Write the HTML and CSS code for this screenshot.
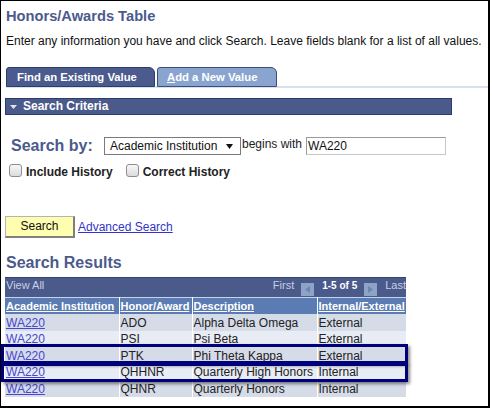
FILE: index.html
```html
<!DOCTYPE html>
<html>
<head>
<meta charset="utf-8">
<title>Honors/Awards Table</title>
<link rel="stylesheet" href="styles.css">
</head>
<body>
<div class="frame">
  <h1 class="page-title">Honors/Awards Table</h1>
  <p class="instr">Enter any information you have and click Search. Leave fields blank for a list of all values.</p>
  <div class="tabs">
    <div class="tab tab-active">Find an Existing Value</div>
    <div class="tab tab-other"><u>A</u>dd a New Value</div>
  </div>
  <div class="criteria"><svg class="tri" width="7" height="4" viewBox="0 0 7 4"><path d="M0 0H7L3.5 4Z" fill="#dfe3ee"/></svg>Search Criteria</div>
  <div class="searchby">
    <span class="sb-label">Search by:</span>
    <div class="select"><span>Academic Institution</span><svg width="7" height="5" viewBox="0 0 7 5"><path d="M0 0H7L3.5 5Z" fill="#111"/></svg></div>
    <span class="begins">begins with</span>
    <div class="input">WA220</div>
  </div>
  <div class="checks">
    <span class="cb"></span><span class="cb-label">Include History</span>
    <span class="cb cb2"></span><span class="cb-label">Correct History</span>
  </div>
  <div class="actions">
    <div class="btn">Search</div>
    <a class="adv" href="#">Advanced Search</a>
  </div>
  <h2 class="results-title">Search Results</h2>
  <div class="results">
    <table class="grid">
      <colgroup><col class="c1"><col class="c2"><col class="c3"><col class="c4"></colgroup>
      <tr class="nav-row">
        <td colspan="4">
          <div class="nav">
            <span class="view">View All</span>
            <span class="first">First</span>
            <span class="pg"><svg width="5" height="7" viewBox="0 0 5 7"><path d="M5 0V7L0 3.5Z" fill="#6b86b3"/></svg></span>
            <span class="count">1-5 of 5</span>
            <span class="pg"><svg width="5" height="7" viewBox="0 0 5 7"><path d="M0 0V7L5 3.5Z" fill="#6b86b3"/></svg></span>
            <span class="last">Last</span>
          </div>
        </td>
      </tr>
      <tr class="head">
        <th><a href="#">Academic Institution</a></th>
        <th><a href="#">Honor/Award</a></th>
        <th><a href="#">Description</a></th>
        <th><a href="#">Internal/External</a></th>
      </tr>
      <tr class="odd tall"><td><a href="#">WA220</a></td><td>ADO</td><td>Alpha Delta Omega</td><td>External</td></tr>
      <tr class="even"><td><a href="#">WA220</a></td><td>PSI</td><td>Psi Beta</td><td>External</td></tr>
      <tr class="odd tall"><td><a href="#">WA220</a></td><td>PTK</td><td>Phi Theta Kappa</td><td>External</td></tr>
      <tr class="even"><td><a href="#">WA220</a></td><td>QHHNR</td><td>Quarterly High Honors</td><td>Internal</td></tr>
      <tr class="odd tall"><td><a href="#">WA220</a></td><td>QHNR</td><td>Quarterly Honors</td><td>Internal</td></tr>
    </table>
    <div class="hl hl1"></div>
    <div class="hl hl2"></div>
  </div>
</div>
</body>
</html>
```

FILE: styles.css
```css
html, body {
  margin: 0;
  padding: 0;
  background: #fff;
}

.frame {
  box-sizing: border-box;
  width: 490px;
  height: 408px;
  border: 1px solid #000;
  border-right-width: 2px;
  border-bottom-width: 2px;
  padding: 6px 0 0 4px;
  font-family: "Liberation Sans", Arial, sans-serif;
  color: #000;
  overflow: hidden;
}

.page-title {
  margin: 0 0 0 1px;
  font-size: 14.67px;
  line-height: 18px;
  font-weight: bold;
  color: #4b5a8c;
}

.instr {
  margin: 9px 0 0 1px;
  font-size: 12px;
  line-height: 14px;
  color: #111;
}

.tabs {
  display: flex;
  align-items: flex-start;
  height: 19px;
  margin: 19px 0 0 1px;
  border-bottom: 2px solid #d6e0ee;
}

.tab {
  box-sizing: border-box;
  height: 20px;
  border: 1px solid #2f3c66;
  border-radius: 3px 6px 0 0;
  color: #fff;
  font-weight: bold;
  font-size: 11.3px;
  line-height: 18px;
  white-space: nowrap;
}

.tab-active {
  width: 149px;
  padding-left: 10px;
  background: #4b5b8d;
}

.tab-other {
  width: 120px;
  margin-left: 2px;
  padding-left: 9px;
  background: #8aa4d0;
  border-color: #3d4c78;
}

.criteria {
  box-sizing: border-box;
  display: flex;
  align-items: center;
  width: 447px;
  height: 17px;
  margin-top: 10px;
  padding-left: 4px;
  background: #4a5a8b;
  border: 1px solid #2c3b69;
  color: #fff;
  font-weight: bold;
  font-size: 12px;
  line-height: 15px;
}

.tri {
  margin-right: 6px;
  margin-top: 1px;
}

.searchby {
  display: flex;
  align-items: flex-start;
  height: 18px;
  margin-top: 22px;
}

.sb-label {
  width: 93px;
  margin-left: 6px;
  font-size: 16px;
  line-height: 18px;
  font-weight: bold;
  color: #4b5a8c;
  white-space: nowrap;
}

.select {
  box-sizing: border-box;
  display: flex;
  align-items: center;
  justify-content: space-between;
  width: 137px;
  height: 18px;
  padding: 0 7px 0 5px;
  border: 1px solid #7a7a7a;
  background: #fff;
  font-size: 12px;
  line-height: 16px;
  color: #111;
}

.begins {
  width: 64px;
  margin-left: 1px;
  font-size: 12px;
  line-height: 14px;
  color: #222;
  white-space: nowrap;
}

.input {
  box-sizing: border-box;
  width: 140px;
  height: 18px;
  padding-left: 1px;
  border: 1px solid;
  border-color: #9a9a9a #c8c8c8 #c8c8c8 #9a9a9a;
  font-size: 12px;
  line-height: 16px;
  color: #111;
}

.checks {
  display: flex;
  align-items: flex-start;
  margin-top: 9px;
}

.cb {
  box-sizing: border-box;
  width: 13px;
  height: 13px;
  margin-left: 4px;
  border: 1px solid #8e8e8e;
  border-radius: 3px;
  background: linear-gradient(#f7f7f7, #dcdcdc);
}

.cb2 {
  margin-left: 13px;
}

.cb-label {
  margin-left: 4px;
  margin-top: 1px;
  font-size: 12px;
  line-height: 14px;
  font-weight: bold;
  color: #222;
}

.actions {
  display: flex;
  align-items: center;
  margin-top: 37px;
}

.btn {
  box-sizing: border-box;
  width: 70px;
  height: 22px;
  border: 1px solid #b4b4b4;
  border-right: 2px solid #7f7f7f;
  border-bottom: 2px solid #7f7f7f;
  background: #fefdb0;
  font-size: 12px;
  line-height: 19px;
  text-align: center;
  color: #111;
}

.adv {
  margin-left: 3px;
  font-size: 12px;
  color: #3434c9;
  text-decoration: underline;
}

.results-title {
  margin: 16px 0 0 1px;
  font-size: 16px;
  line-height: 18px;
  font-weight: bold;
  color: #4b5a8c;
}

.results {
  position: relative;
  width: 401px;
  margin-top: 5px;
}

.grid {
  width: 401px;
  table-layout: fixed;
  border-collapse: collapse;
  border-spacing: 0;
  font-size: 12px;
}

.c1 { width: 114px; }
.c2 { width: 73px; }
.c3 { width: 125px; }
.c4 { width: 89px; }

.grid td, .grid th {
  padding: 0 0 0 1px;
  text-align: left;
  white-space: nowrap;
  overflow: hidden;
}

.nav-row td {
  height: 19px;
  padding: 0;
  border-top: 1px solid #34446f;
  background: #4a5a8b;
  vertical-align: top;
}

.nav {
  display: flex;
  align-items: flex-start;
  height: 19px;
  padding-left: 1px;
  font-size: 11px;
  line-height: 15px;
  color: #c9d0e2;
}

.view {
  flex: 1;
}

.pg {
  display: flex;
  align-items: center;
  justify-content: center;
  width: 13px;
  height: 13px;
  margin: 5px 0 0 7px;
  background: #8ea4c6;
}

.count {
  margin: 0 0 0 8px;
  font-size: 10px;
  font-weight: bold;
  color: #fff;
}

.count + .pg {
  margin-left: 7px;
}

.last {
  margin-left: 8px;
}

.head th {
  height: 16px;
  border-top: 1px solid #c8d3e6;
  border-right: 1px solid #fff;
  background: #5b7cb2;
  font-size: 11px;
  font-weight: bold;
  vertical-align: middle;
}

.head th:last-child {
  border-right: 0;
}

.head th a {
  color: #fff;
  text-decoration: underline;
}

.grid tr.odd td, .grid tr.even td {
  height: 16px;
  border-right: 1px solid #fff;
  color: #222;
  vertical-align: middle;
}

.grid tr.tall td {
  height: 17px;
}

.grid tr td:last-child {
  border-right: 0;
}

.odd td {
  background: #d5dbe7;
}

.even td {
  background: #e8ecf4;
}

.grid td a {
  color: #4646d0;
  text-decoration: underline;
}

.hl {
  position: absolute;
  left: -4px;
  box-sizing: border-box;
  width: 407px;
  border: 3px solid #00007a;
  box-shadow: 2px 2px 3px rgba(0, 0, 0, 0.45);
}

.hl1 {
  top: 67px;
  height: 20px;
}

.hl2 {
  top: 86px;
  height: 19px;
}
```
